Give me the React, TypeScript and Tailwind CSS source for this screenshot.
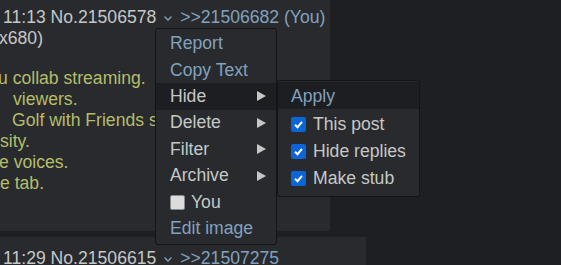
import React from "react";

const Chevron = () => (
  <svg width="10" height="8" viewBox="0 0 10 8" className="inline-block mx-[7px] align-middle">
    <polyline points="1.5,2.5 5,6 8.5,2.5" fill="none" stroke="#81a2be" strokeWidth="1.3" />
  </svg>
);

const Arrow = () => (
  <svg width="9" height="10" viewBox="0 0 9 10" className="shrink-0">
    <polygon points="0,0 9,5 0,10" fill="#c5c8c6" />
  </svg>
);

const Check = ({ on }: { on: boolean }) =>
  on ? (
    <span className="w-[15px] h-[15px] rounded-[2px] bg-[#0b65d6] flex items-center justify-center shrink-0">
      <svg width="11" height="11" viewBox="0 0 11 11">
        <polyline points="2,5.8 4.5,8.2 9,2.8" fill="none" stroke="#fff" strokeWidth="2" />
      </svg>
    </span>
  ) : (
    <span className="w-[15px] h-[15px] rounded-[2px] bg-[#dcdcdc] border border-[#8a8a8a] shrink-0" />
  );

const MenuRow = ({
  label,
  link,
  sub,
  active,
}: {
  label: string;
  link?: boolean;
  sub?: boolean;
  active?: boolean;
}) => (
  <div
    className={`h-[26.4px] flex items-center justify-between pl-[14px] pr-[10px] ${
      active ? "bg-[#1d1e21]" : ""
    } ${link ? "text-[#81a2be]" : "text-[#c5c8c6]"}`}
  >
    <span>{label}</span>
    {sub && <Arrow />}
  </div>
);

export default function App() {
  const body = [
    { t: "u collab streaming.", ml: "ml-[-2px]" },
    { t: "viewers.", ml: "ml-[13px]" },
    { t: "Golf with Friends stream tonight", ml: "ml-[12px]" },
    { t: "sity.", ml: "ml-0" },
    { t: "e voices.", ml: "ml-[-1px]" },
    { t: "e tab.", ml: "ml-0" },
  ];

  return (
    <div className="relative w-[561px] h-[265px] overflow-hidden bg-[#1e1f22] font-['Liberation_Sans',Arial,sans-serif] text-[17.6px] leading-[21px] text-[#c5c8c6]">
      {/* first post */}
      <div className="w-[330px] h-[231px] bg-[#282a2e] pt-[7px] overflow-hidden whitespace-nowrap">
        <div className="pl-[3px] flex items-center">
          <span>11:13 No.21506578</span>
          <Chevron />
          <span className="text-[#81a2be]">&gt;&gt;21506682 (You)</span>
        </div>
        <div className="ml-[-1px]">x680)</div>
        <div className="mt-[19px] text-[#b5bd68]">
          {body.map((l) => (
            <div key={l.t} className={l.ml}>
              {l.t}
            </div>
          ))}
        </div>
      </div>

      {/* second post */}
      <div className="mt-[6px] w-[366px] h-[40px] bg-[#282a2e] pt-[11px] whitespace-nowrap">
        <div className="pl-[3px] flex items-center">
          <span>11:29 No.21506615</span>
          <Chevron />
          <span className="text-[#81a2be]">&gt;&gt;21507275</span>
        </div>
      </div>

      {/* context menu */}
      <div className="absolute left-[155px] top-[28px] w-[122px] pt-[1.5px] pb-[2px] bg-[#282a2e] border border-[#131416] rounded-[3px] whitespace-nowrap">
        <MenuRow label="Report" link />
        <MenuRow label="Copy Text" link />
        <MenuRow label="Hide" sub active />
        <MenuRow label="Delete" sub />
        <MenuRow label="Filter" sub />
        <MenuRow label="Archive" sub />
        <div className="h-[26.4px] flex items-center gap-[6px] pl-[14px]">
          <Check on={false} />
          <span>You</span>
        </div>
        <MenuRow label="Edit image" link />
      </div>

      {/* submenu */}
      <div className="absolute left-[277px] top-[80px] w-[143px] pt-[1px] pb-[6px] bg-[#282a2e] border border-[#131416] rounded-[3px] whitespace-nowrap">
        <div className="h-[27px] flex items-center pl-[13px] pt-[2px] bg-[#1d1e21] text-[#81a2be]">Apply</div>
        {["This post", "Hide replies", "Make stub"].map((t) => (
          <div key={t} className="h-[27px] flex items-center gap-[7px] pl-[13px] pt-[3px]">
            <Check on />
            <span>{t}</span>
          </div>
        ))}
      </div>
    </div>
  );
}
